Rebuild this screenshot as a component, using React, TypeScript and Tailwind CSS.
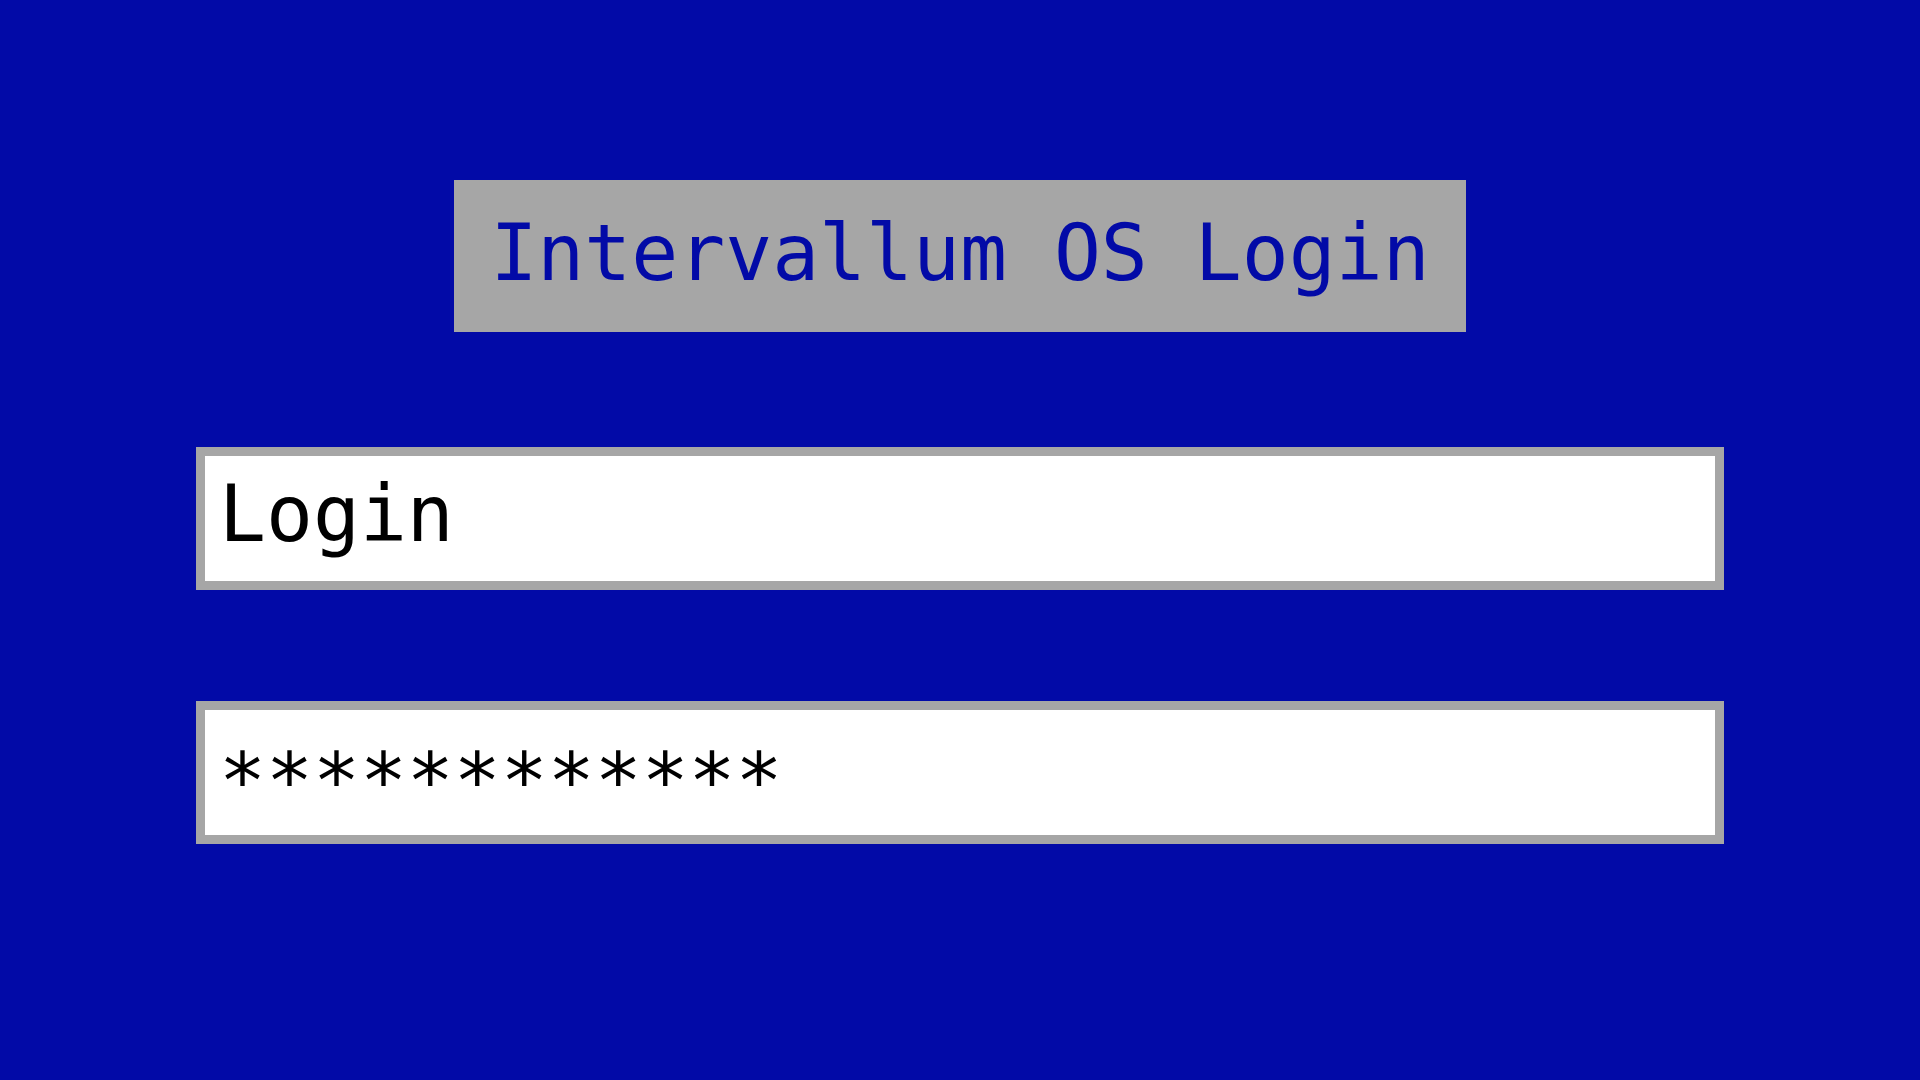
import React from "react";

function Field({ value, className }: { value: string; className?: string }) {
  return (
    <div
      className={
        "w-[1528px] h-[143px] border-[9px] border-[#a6a6a6] bg-white flex items-center pl-[14px] text-[78px] leading-none text-black " +
        (className ?? "")
      }
    >
      <span>{value}</span>
    </div>
  );
}

export default function App() {
  return (
    <div className="w-full h-screen bg-[#020aa7] flex flex-col items-center pt-[180px] font-['DejaVu_Sans_Mono','Liberation_Mono',monospace]">
      <div className="w-[1012px] h-[152px] bg-[#a6a6a6] flex items-center justify-center pb-[6px] text-[78px] leading-none text-[#020aa7]">
        <span>Intervallum OS Login</span>
      </div>

      <Field value="Login" className="mt-[115px] pb-[10px]" />
      <Field value="************" className="mt-[111px] pt-[16px]" />
    </div>
  );
}
